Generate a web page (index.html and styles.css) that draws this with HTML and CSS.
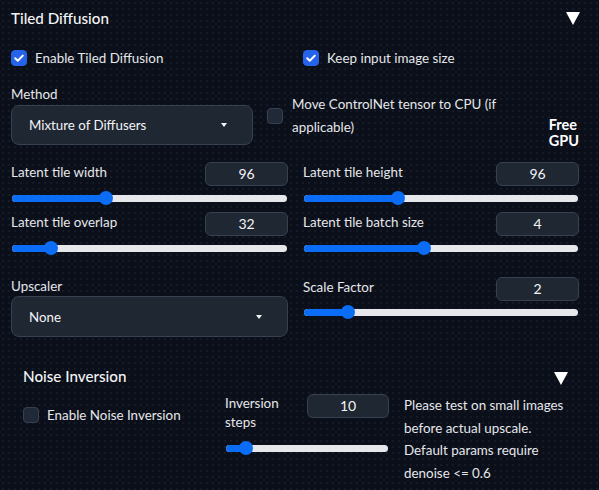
FILE: index.html
```html
<!DOCTYPE html>
<html>
<head>
<meta charset="utf-8">
<link rel="stylesheet" href="styles.css">
</head>
<body>
<div class="panel">
  <div class="hdr">
    <span class="title">Tiled Diffusion</span>
    <span class="tri"></span>
  </div>

  <div class="cols check-row">
    <label class="check"><span class="box on"><svg viewBox="0 0 16 16" width="16" height="16"><path d="M4.2 8.3 L6.8 10.8 L11.8 5.6" fill="none" stroke="#fff" stroke-width="2" stroke-linecap="round" stroke-linejoin="round"/></svg></span><span>Enable Tiled Diffusion</span></label>
    <label class="check"><span class="box on"><svg viewBox="0 0 16 16" width="16" height="16"><path d="M4.2 8.3 L6.8 10.8 L11.8 5.6" fill="none" stroke="#fff" stroke-width="2" stroke-linecap="round" stroke-linejoin="round"/></svg></span><span>Keep input image size</span></label>
  </div>

  <div class="method-row">
    <div class="method">
      <div class="lbl">Method</div>
      <div class="dropdown"><span>Mixture of Diffusers</span><span class="caret"></span></div>
    </div>
    <label class="check cpu"><span class="box"></span><span class="two">Move ControlNet tensor to CPU (if<br>applicable)</span></label>
    <div class="free">Free<br>GPU</div>
  </div>

  <div class="cols sliders">
    <div class="sblock">
      <div class="stop"><span class="lbl">Latent tile width</span><span class="num">96</span></div>
      <div class="slider"><div class="fill" style="width:34.2%"></div><div class="thumb" style="left:34.2%"></div></div>
    </div>
    <div class="sblock">
      <div class="stop"><span class="lbl">Latent tile height</span><span class="num">96</span></div>
      <div class="slider"><div class="fill" style="width:34.3%"></div><div class="thumb" style="left:34.3%"></div></div>
    </div>
    <div class="sblock">
      <div class="stop"><span class="lbl">Latent tile overlap</span><span class="num">32</span></div>
      <div class="slider"><div class="fill" style="width:14.2%"></div><div class="thumb" style="left:14.2%"></div></div>
    </div>
    <div class="sblock">
      <div class="stop"><span class="lbl">Latent tile batch size</span><span class="num">4</span></div>
      <div class="slider"><div class="fill" style="width:43.8%"></div><div class="thumb" style="left:43.8%"></div></div>
    </div>
  </div>

  <div class="cols upscale-row">
    <div class="upscaler">
      <div class="lbl">Upscaler</div>
      <div class="dropdown tall"><span>None</span><span class="caret"></span></div>
    </div>
    <div class="sblock scale">
      <div class="stop"><span class="lbl">Scale Factor</span><span class="num">2</span></div>
      <div class="slider"><div class="fill" style="width:16%"></div><div class="thumb" style="left:16%"></div></div>
    </div>
  </div>

  <div class="sub">
    <div class="hdr sub-hdr">
      <span class="title">Noise Inversion</span>
      <span class="tri small"></span>
    </div>
    <div class="noise-row">
      <label class="check noise-check"><span class="box"></span><span>Enable Noise Inversion</span></label>
      <div class="inv">
        <div class="stop"><span class="lbl two-lbl">Inversion<br>steps</span><span class="num">10</span></div>
        <div class="slider"><div class="fill" style="width:12.2%"></div><div class="thumb" style="left:12.2%"></div></div>
      </div>
      <div class="note">Please test on small images<br>before actual upscale.<br>Default params require<br>denoise &lt;= 0.6</div>
    </div>
  </div>
</div>
</body>
</html>
```

FILE: styles.css
```css
* { box-sizing: border-box; }
html, body {
  margin: 0;
  padding: 0;
}
body {
  width: 599px;
  height: 490px;
  overflow: hidden;
  background-color: #0b0f19;
  background-image: radial-gradient(circle, #161b27 0.7px, transparent 1px);
  background-size: 6px 6px;
  font-family: "Source Sans Pro", Lato, "Liberation Sans", sans-serif;
  font-size: 13.4px;
  color: #e5e7eb;
}
.panel {
  padding: 0 19px 0 11px;
}
.hdr {
  height: 36px;
  display: flex;
  justify-content: space-between;
  align-items: center;
}
.title {
  font-size: 15.2px;
  font-weight: 500;
  color: #f3f4f6;
}
.tri {
  width: 0;
  height: 0;
  border-left: 7.5px solid transparent;
  border-right: 7.5px solid transparent;
  border-top: 13px solid #ffffff;
  margin-top: 1px;
}
.tri.small {
  border-left-width: 7px;
  border-right-width: 7px;
}
.cols {
  display: grid;
  grid-template-columns: 277px 276px;
  column-gap: 15px;
}
.check-row {
  margin-top: 10px;
  height: 24px;
  align-items: center;
}
.check {
  display: flex;
  align-items: center;
  gap: 8px;
  color: #e5e7eb;
}
.box {
  width: 16px;
  height: 16px;
  border-radius: 4px;
  background: #1f2937;
  border: 1px solid #374151;
  flex: none;
  display: flex;
}
.box.on {
  background: #2563eb;
  border-color: #2563eb;
}
.box.on svg { margin: -1px; }
.lbl {
  line-height: 20px;
  color: #e5e7eb;
}
.method-row {
  margin-top: 14px;
  display: flex;
  height: 61px;
}
.method {
  width: 242px;
  flex: none;
}
.dropdown {
  margin-top: 1px;
  height: 40px;
  background: #1f2733;
  border: 1px solid #374151;
  border-radius: 8px;
  display: flex;
  align-items: center;
  justify-content: space-between;
  padding: 0 25px 0 17px;
  font-size: 13.3px;
  color: #f3f4f6;
}
.dropdown.tall { height: 41px; }
.caret {
  width: 0;
  height: 0;
  border-left: 3.5px solid transparent;
  border-right: 3.5px solid transparent;
  border-top: 4px solid #f3f4f6;
}
.cpu {
  margin-left: 14px;
  margin-right: auto;
  align-self: center;
  gap: 9px;
  margin-top: 2px;
}
.two {
  line-height: 23px;
}
.free {
  align-self: flex-end;
  margin-bottom: -4px;
  margin-right: 1px;
  font-weight: 700;
  font-size: 14.5px;
  line-height: 16px;
  text-align: left;
  color: #ffffff;
}
.sliders {
  margin-top: 17px;
  row-gap: 7px;
}
.stop {
  display: flex;
  justify-content: space-between;
  align-items: flex-start;
}
.num {
  width: 83px;
  height: 24px;
  background: #1f2733;
  border: 1px solid #374151;
  border-radius: 6px;
  text-align: center;
  line-height: 22px;
  font-size: 14px;
  color: #f3f4f6;
}
.slider {
  position: relative;
  margin-top: 5px;
  height: 14px;
  margin-left: 1px;
  margin-right: 1px;
}
.slider::before {
  content: "";
  position: absolute;
  left: 0;
  right: 0;
  top: 3.5px;
  height: 7px;
  border-radius: 4px;
  background: #e5e7eb;
}
.fill {
  position: absolute;
  left: 0;
  top: 3.5px;
  height: 7px;
  border-radius: 4px 0 0 4px;
  background: #0b6cf5;
}
.thumb {
  position: absolute;
  top: 0;
  width: 14px;
  height: 14px;
  margin-left: -7px;
  border-radius: 50%;
  background: #0b6cf5;
}
.upscale-row {
  margin-top: 22px;
}
.upscaler .lbl { line-height: 19px; }
.upscaler .dropdown { margin-top: 0; }
.scale .slider { margin-top: 4px; }
.sub {
  margin-top: 27px;
  padding: 0 12px;
}
.sub-hdr {
  height: 24px;
}
.sub-hdr .tri { margin-top: 4px; }
.noise-row {
  margin-top: 6px;
  display: grid;
  grid-template-columns: 201px 164px auto;
  column-gap: 15px;
  margin-right: -12px;
}
.noise-check {
  align-self: start;
  margin-top: 13px;
  gap: 8px;
}
.inv {
  margin-left: -14px;
  margin-right: 14px;
  width: 164px;
}
.inv .num { width: 82px; }
.two-lbl {
  line-height: 19px;
  margin-top: 0;
}
.inv .slider { margin-top: 9px; }
.note {
  margin-left: -14px;
  line-height: 22.5px;
  white-space: nowrap;
  color: #e5e7eb;
}
```
